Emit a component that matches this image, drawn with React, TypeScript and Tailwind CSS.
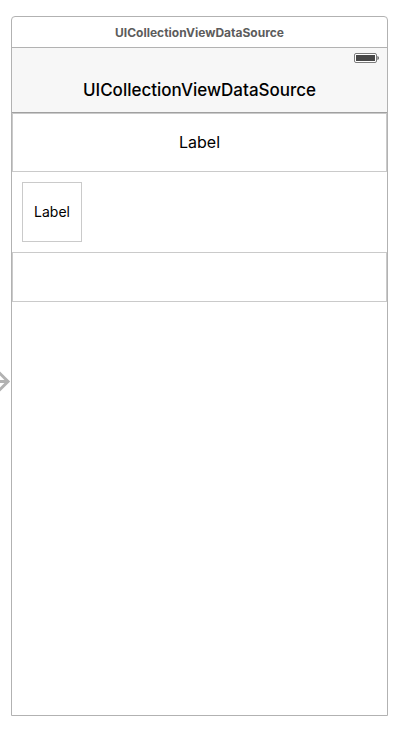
function EntryArrow() {
  return (
    <svg className="h-6 w-[11px]" viewBox="0 0 11 24" aria-hidden="true">
      <path d="M-2 12.5H7M-2 2.5L8 12.5L-2 22.5" fill="none" stroke="#b2b2b2" strokeWidth="3" />
    </svg>
  );
}

function Battery() {
  return (
    <svg className="h-[10px] w-[25px]" viewBox="0 0 25 10" role="img" aria-label="Battery full">
      <rect x="0.5" y="0.5" width="22" height="9" rx="1.5" fill="#fff" stroke="#7c7c7c" />
      <rect x="2" y="2" width="19" height="6" fill="#484848" />
      <path d="M23.5 3C25.2 3.6 25.2 6.4 23.5 7Z" fill="#484848" />
    </svg>
  );
}

export default function App() {
  return (
    <div className="flex min-h-screen bg-white pt-4 pr-[18px] pb-[13px] font-['Inter','Liberation_Sans',sans-serif] text-black">
      <div className="w-[11px] shrink-0 pt-[353px]">
        <EntryArrow />
      </div>
      <section className="flex min-w-0 flex-1 flex-col rounded-t-[4px] border border-[#b2b2b2]">
        <div className="flex h-[31px] items-center justify-center border-b border-[#b2b2b2] pt-px text-[12px] leading-4 font-bold text-[#5c5c5c]">
          UICollectionViewDataSource
        </div>
        <header className="h-[65px] border-b border-[#a0a0a0] bg-[#f7f7f7]">
          <div className="flex h-5 items-center justify-end pr-2">
            <Battery />
          </div>
          <h1 className="flex h-11 items-center justify-center text-[17px] leading-5 font-medium">
            UICollectionViewDataSource
          </h1>
        </header>
        <main>
          <div className="flex h-[59px] items-center justify-center border border-[#cacaca] pb-px text-[16px] leading-5">
            Label
          </div>
          <div className="p-[10px]">
            <div className="flex size-[60px] items-center justify-center border border-[#cacaca] text-[14px] leading-5">
              Label
            </div>
          </div>
          <div className="h-[50px] border border-[#cacaca]" />
        </main>
      </section>
    </div>
  );
}
